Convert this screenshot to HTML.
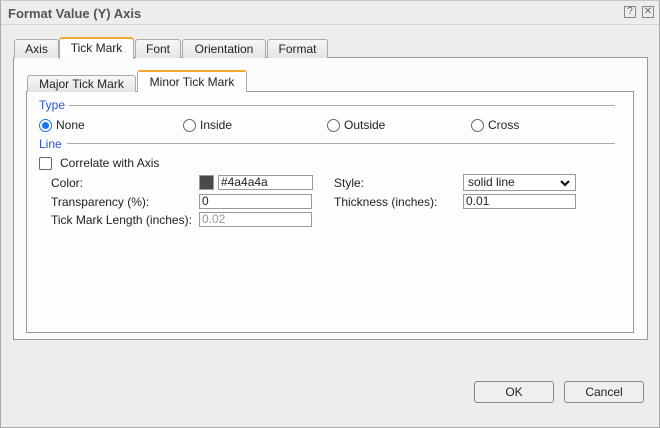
<!DOCTYPE html>
<html><head><style>
*{box-sizing:border-box;margin:0;padding:0}
body{width:660px;height:428px;background:#ededeb;font-family:"Liberation Sans",Tahoma,sans-serif;font-size:12px;color:#222;position:relative;overflow:hidden}
.a{position:absolute}
.dlg{left:0;top:0;width:660px;height:428px;border:1px solid #a8a8a8;border-top-color:#c8c8c8}
.title{left:8px;top:6px;font-weight:bold;font-size:13px;color:#555}
.tline{left:1px;top:24px;width:658px;height:1px;background:#d6d6d6}
.ic{top:6px;width:12px;height:12px;border:1px solid #888;font-size:10px;line-height:10px;text-align:center;color:#666}
.tab{height:19px;top:39px;border:1px solid #aaa;border-bottom:none;background:linear-gradient(#f7f7f7,#e4e4e4);border-radius:3px 3px 0 0;text-align:center;line-height:18px;font-size:12px;color:#222}
.sel{background:#fdfdfd;border-top:2px solid #f0a830;height:22px;top:37px;z-index:2}
.panel{left:13px;top:57px;width:635px;height:283px;border:1px solid #999;background:#fcfcfc}
.ipanel{left:26px;top:91px;width:608px;height:242px;border:1px solid #999;background:#fdfdfd}
.sec{color:#2b56c9;font-size:12px}
.hl{height:1px;background:#aaa}
.rad{width:13px;height:13px;border:1px solid #666;border-radius:50%;background:#fff}
.on{border-color:#1a73e8}
.on:after{content:"";position:absolute;left:2px;top:2px;width:7px;height:7px;border-radius:50%;background:#1a73e8}
.in{height:15px;border:1px solid #999;background:#fff;padding-left:2px;line-height:13px;font-size:12px}
.btn{top:381px;width:80px;height:22px;border:1px solid #888;border-radius:3px;background:#efefef;text-align:center;line-height:20px;font-size:12px}
</style></head><body>
<div class="a dlg"></div>
<div class="a title">Format Value (Y) Axis</div>
<div class="a tline"></div>
<div class="a ic" style="left:624px">?</div>
<div class="a ic" style="left:642px">✕</div>

<div class="a panel"></div>
<div class="a tab" style="left:14px;width:45px">Axis</div>
<div class="a tab sel" style="left:59px;width:75px">Tick Mark</div>
<div class="a tab" style="left:135px;width:46px">Font</div>
<div class="a tab" style="left:182px;width:84px">Orientation</div>
<div class="a tab" style="left:267px;width:61px">Format</div>

<div class="a ipanel"></div>
<div class="a tab" style="left:27px;top:75px;height:17px;line-height:16px;width:109px">Major Tick Mark</div>
<div class="a tab sel" style="left:137px;top:70px;height:22px;width:110px;line-height:20px">Minor Tick Mark</div>

<div class="a sec" style="left:39px;top:98px">Type</div>
<div class="a hl" style="left:69px;top:105px;width:546px"></div>
<div class="a rad on" style="left:39px;top:119px"></div><div class="a" style="left:56px;top:118px">None</div>
<div class="a rad" style="left:183px;top:119px"></div><div class="a" style="left:200px;top:118px">Inside</div>
<div class="a rad" style="left:327px;top:119px"></div><div class="a" style="left:344px;top:118px">Outside</div>
<div class="a rad" style="left:471px;top:119px"></div><div class="a" style="left:488px;top:118px">Cross</div>

<div class="a sec" style="left:39px;top:137px">Line</div>
<div class="a hl" style="left:67px;top:143px;width:548px"></div>
<div class="a" style="left:39px;top:157px;width:13px;height:13px;border:1px solid #666;border-radius:2px;background:#fff"></div>
<div class="a" style="left:60px;top:156px">Correlate with Axis</div>

<div class="a" style="left:51px;top:176px">Color:</div>
<div class="a" style="left:199px;top:175px;width:15px;height:15px;border:1px solid #999;background:#4a4a4a"></div>
<div class="a in" style="left:218px;top:175px;width:95px">#4a4a4a</div>
<div class="a" style="left:51px;top:195px">Transparency (%):</div>
<div class="a in" style="left:199px;top:194px;width:113px">0</div>
<div class="a" style="left:51px;top:213px">Tick Mark Length (inches):</div>
<div class="a in" style="left:199px;top:212px;width:113px;color:#999">0.02</div>

<div class="a" style="left:334px;top:176px">Style:</div>
<div class="a in" style="left:463px;top:174px;width:113px;height:17px;line-height:15px;padding-left:4px">solid line<svg style="position:absolute;right:5px;top:4px" width="10" height="8" viewBox="0 0 10 8"><path d="M1 2 L5 6 L9 2" stroke="#111" stroke-width="2.2" fill="none"/></svg></div>
<div class="a" style="left:334px;top:195px">Thickness (inches):</div>
<div class="a in" style="left:463px;top:194px;width:113px">0.01</div>

<div class="a btn" style="left:474px">OK</div>
<div class="a btn" style="left:564px">Cancel</div>
</body></html>
